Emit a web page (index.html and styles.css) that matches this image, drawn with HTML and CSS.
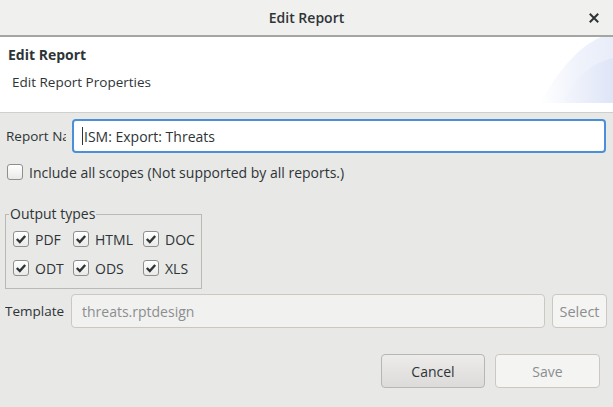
FILE: index.html
```html
<!DOCTYPE html>
<html>
<head>
<meta charset="utf-8">
<link rel="stylesheet" href="styles.css">
</head>
<body>
<div class="dialog">
  <div class="titlebar">
    <span class="title">Edit Report</span>
    <svg class="close" width="10" height="10" viewBox="0 0 10 10"><path d="M1.5 1.5 L8.5 8.5 M8.5 1.5 L1.5 8.5" stroke="#2e3436" stroke-width="2" stroke-linecap="square"/></svg>
  </div>
  <div class="header">
    <div class="h-title">Edit Report</div>
    <div class="h-sub">Edit Report Properties</div>
    <svg class="deco" width="80" height="66" viewBox="0 0 80 66">
      <defs>
        <linearGradient id="g1" x1="0" y1="0" x2="1" y2="0">
          <stop offset="0" stop-color="#ffffff"/>
          <stop offset="0.5" stop-color="#f0f3fb"/>
          <stop offset="1" stop-color="#e8edf9"/>
        </linearGradient>
        <linearGradient id="g2" x1="0" y1="0" x2="1" y2="0">
          <stop offset="0" stop-color="#f4f6fc"/>
          <stop offset="1" stop-color="#dee5f7"/>
        </linearGradient>
      </defs>
      <path d="M7 66 C 25 34, 45 10, 68 0 L80 0 L80 66 Z" fill="url(#g1)"/>
      <path d="M30 66 C 40 42, 58 26, 80 21 L80 66 Z" fill="url(#g2)"/>
    </svg>
  </div>
  <div class="content">
    <div class="row name-row">
      <span class="label name-label">Report Name</span>
      <div class="field focused"><span class="caret"></span>ISM: Export: Threats</div>
    </div>
    <div class="check-row">
      <span class="cb"></span>
      <span class="cb-label">Include all scopes (Not supported by all reports.)</span>
    </div>
    <fieldset class="group">
      <legend>Output types</legend>
      <div class="types">
        <div class="type"><span class="cb checked"><svg width="12" height="12" viewBox="0 0 12 12"><path d="M1.8 6 L4.8 9 L10.2 3" fill="none" stroke="#2e3436" stroke-width="2.4"/></svg></span>PDF</div>
        <div class="type"><span class="cb checked"><svg width="12" height="12" viewBox="0 0 12 12"><path d="M1.8 6 L4.8 9 L10.2 3" fill="none" stroke="#2e3436" stroke-width="2.4"/></svg></span>HTML</div>
        <div class="type"><span class="cb checked"><svg width="12" height="12" viewBox="0 0 12 12"><path d="M1.8 6 L4.8 9 L10.2 3" fill="none" stroke="#2e3436" stroke-width="2.4"/></svg></span>DOC</div>
        <div class="type"><span class="cb checked"><svg width="12" height="12" viewBox="0 0 12 12"><path d="M1.8 6 L4.8 9 L10.2 3" fill="none" stroke="#2e3436" stroke-width="2.4"/></svg></span>ODT</div>
        <div class="type"><span class="cb checked"><svg width="12" height="12" viewBox="0 0 12 12"><path d="M1.8 6 L4.8 9 L10.2 3" fill="none" stroke="#2e3436" stroke-width="2.4"/></svg></span>ODS</div>
        <div class="type"><span class="cb checked"><svg width="12" height="12" viewBox="0 0 12 12"><path d="M1.8 6 L4.8 9 L10.2 3" fill="none" stroke="#2e3436" stroke-width="2.4"/></svg></span>XLS</div>
      </div>
    </fieldset>
    <div class="row template-row">
      <span class="label tpl-label">Template</span>
      <div class="field disabled">threats.rptdesign</div>
      <div class="btn small disabled-btn">Select</div>
    </div>
    <div class="actions">
      <div class="btn cancel">Cancel</div>
      <div class="btn save disabled-btn">Save</div>
    </div>
  </div>
</div>
</body>
</html>
```
FILE: styles.css
```css
html, body {
  margin: 0;
  padding: 0;
  background: #e8e8e7;
}
.dialog {
  width: 613px;
  height: 407px;
  overflow: hidden;
  background: #e8e8e7;
  font-family: "Open Sans", "DejaVu Sans", sans-serif;
  font-size: 13.5px;
  color: #2e3436;
  display: flex;
  flex-direction: column;
}
.titlebar {
  height: 35px;
  background: #f0f0ef;
  border-bottom: 2px solid #a5a5a2;
  display: flex;
  align-items: center;
  justify-content: center;
  position: relative;
  flex: none;
}
.title {
  font-weight: 600;
  font-size: 14px;
}
.close {
  position: absolute;
  left: 589px;
  top: 13px;
}
.header {
  height: 75px;
  background: #ffffff;
  border-bottom: 1px solid #cfcfcd;
  position: relative;
  flex: none;
  padding: 0;
}
.h-title {
  font-weight: 700;
  font-size: 14px;
  margin: 8px 0 0 8px;
  line-height: 20px;
}
.h-sub {
  margin: 7px 0 0 12px;
  line-height: 20px;
}
.deco {
  position: absolute;
  right: 0;
  top: 0;
}
.content {
  display: flex;
  flex-direction: column;
  flex: 1;
}
.row {
  display: flex;
  align-items: center;
}
.name-row {
  margin: 6px 7px 0 6px;
  gap: 6px;
}
.label {
  white-space: nowrap;
  overflow: hidden;
  flex: none;
}
.name-label {
  width: 60px;
}
.field {
  flex: 1;
  height: 34px;
  box-sizing: border-box;
  border-radius: 4px;
  display: flex;
  align-items: center;
  white-space: nowrap;
}
.focused {
  background: #ffffff;
  border: 2px solid #4a90d9;
  padding-left: 8px;
  font-size: 14px;
}
.caret {
  width: 1px;
  height: 18px;
  background: #2e3436;
  margin-right: 1px;
}
.check-row {
  display: flex;
  align-items: center;
  margin: 10px 0 0 7px;
  gap: 6px;
  height: 18px;
}
.cb {
  width: 16px;
  height: 16px;
  box-sizing: border-box;
  border: 1px solid #8f908e;
  border-radius: 3px;
  background: linear-gradient(#ffffff, #e9e9e8);
  display: inline-flex;
  align-items: center;
  justify-content: center;
  flex: none;
}
.cb-label {
  font-size: 14px;
}
.group {
  margin: 24px 0 0 5px;
  width: 197px;
  box-sizing: border-box;
  border: 1px solid #b9b9b6;
  padding: 6px 0 10px 7px;
  min-width: 0;
}
.group legend {
  padding: 0 1px;
  margin-left: -4px;
  font-size: 14px;
  line-height: 18px;
}
.types {
  display: grid;
  grid-template-columns: 60px 70px auto;
  row-gap: 9px;
}
.type {
  display: flex;
  align-items: center;
  gap: 6px;
  height: 20px;
  font-size: 14px;
}
.template-row {
  margin: 5px 6px 0 5px;
}
.tpl-label {
  width: 66px;
}
.disabled {
  background: #f1f1f0;
  border: 1px solid #cdc7c2;
  color: #8b8e8f;
  padding-left: 10px;
  font-size: 14px;
}
.btn {
  height: 34px;
  box-sizing: border-box;
  border-radius: 4px;
  display: flex;
  align-items: center;
  justify-content: center;
  flex: none;
}
.small {
  width: 55px;
  margin-left: 7px;
  font-size: 14.5px;
}
.disabled-btn {
  background: #f4f4f2;
  border: 1px solid #cdc7c2;
  color: #8b8e8f;
}
.actions {
  display: flex;
  justify-content: flex-end;
  gap: 10px;
  margin: 26px 13px 0 0;
}
.cancel {
  width: 104px;
  background: linear-gradient(#edeceb, #dcdbd9);
  border: 1px solid #b6b6b3;
  font-size: 14px;
}
.save {
  width: 105px;
  font-size: 14px;
}
```
